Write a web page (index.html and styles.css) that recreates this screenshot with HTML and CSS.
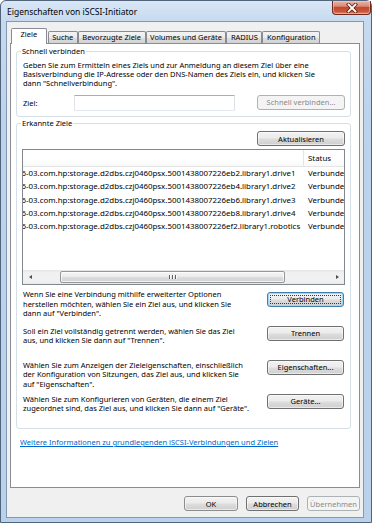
FILE: index.html
```html
<!DOCTYPE html>
<html lang="de">
<head>
<meta charset="utf-8">
<title>Eigenschaften von iSCSI-Initiator</title>
<link rel="stylesheet" href="styles.css">
</head>
<body>
<div class="window">
  <div class="titlebar">
    <span class="title">Eigenschaften von iSCSI-Initiator</span>
    <button class="close" type="button" aria-label="Schließen">
      <svg width="12" height="10" viewBox="0 0 12 10" aria-hidden="true">
        <path d="M2.5 1.5 L9.5 8.5 M9.5 1.5 L2.5 8.5" stroke="#5a1c10" stroke-width="3.4" stroke-linecap="square" fill="none"/>
        <path d="M2.5 1.5 L9.5 8.5 M9.5 1.5 L2.5 8.5" stroke="#ffffff" stroke-width="1.8" stroke-linecap="square" fill="none"/>
      </svg>
    </button>
  </div>
  <div class="client">
    <div class="tabs">
      <div class="tab tab-active">Ziele</div>
      <div class="tab">Suche</div>
      <div class="tab">Bevorzugte Ziele</div>
      <div class="tab">Volumes und Geräte</div>
      <div class="tab">RADIUS</div>
      <div class="tab">Konfiguration</div>
    </div>
    <div class="panel">
      <fieldset class="group group-quick">
        <legend>Schnell verbinden</legend>
        <p class="desc">Geben Sie zum Ermitteln eines Ziels und zur Anmeldung an diesem Ziel über eine<br>Basisverbindung die IP-Adresse oder den DNS-Namen des Ziels ein, und klicken Sie<br>dann "Schnellverbindung".</p>
        <div class="quick-row">
          <label class="quick-label" for="ziel">Ziel:</label>
          <input id="ziel" class="textbox" type="text">
          <button class="btn btn-wide" type="button" disabled>Schnell verbinden...</button>
        </div>
      </fieldset>

      <fieldset class="group group-targets">
        <legend>Erkannte Ziele</legend>
        <div class="refresh-row">
          <button class="btn btn-wide" type="button">Aktualisieren</button>
        </div>
        <div class="listview">
          <div class="lv-header">
            <div class="lv-col-name"></div>
            <div class="lv-col-status">Status</div>
          </div>
          <div class="lv-body">
            <div class="lv-row"><div class="lv-name"><span class="off"><span>iqn.1986</span></span>-03.com.hp:storage.d2dbs.czj0460psx.5001438007226eb2.library1.drive1</div><div class="lv-status">Verbunden</div></div>
            <div class="lv-row"><div class="lv-name"><span class="off"><span>iqn.1986</span></span>-03.com.hp:storage.d2dbs.czj0460psx.5001438007226eb4.library1.drive2</div><div class="lv-status">Verbunden</div></div>
            <div class="lv-row"><div class="lv-name"><span class="off"><span>iqn.1986</span></span>-03.com.hp:storage.d2dbs.czj0460psx.5001438007226eb6.library1.drive3</div><div class="lv-status">Verbunden</div></div>
            <div class="lv-row"><div class="lv-name"><span class="off"><span>iqn.1986</span></span>-03.com.hp:storage.d2dbs.czj0460psx.5001438007226eb8.library1.drive4</div><div class="lv-status">Verbunden</div></div>
            <div class="lv-row"><div class="lv-name"><span class="off"><span>iqn.1986</span></span>-03.com.hp:storage.d2dbs.czj0460psx.5001438007226ef2.library1.robotics</div><div class="lv-status">Verbunden</div></div>
          </div>
          <div class="hscroll">
            <div class="sb-arrow"><span class="tri tri-left"></span></div>
            <div class="sb-track">
              <div class="sb-thumb"><span class="grip"></span><span class="grip"></span><span class="grip"></span></div>
            </div>
            <div class="sb-arrow"><span class="tri tri-right"></span></div>
          </div>
        </div>

        <div class="action action-first">
          <p class="action-text action-text-first">Wenn Sie eine Verbindung mithilfe erweiterter Optionen<br>herstellen möchten, wählen Sie ein Ziel aus, und klicken Sie<br>dann auf "Verbinden".</p>
          <button class="btn btn-action btn-default" type="button">Verbinden</button>
        </div>
        <div class="action">
          <p class="action-text">Soll ein Ziel vollständig getrennt werden, wählen Sie das Ziel<br>aus, und klicken Sie dann auf "Trennen".</p>
          <button class="btn btn-action" type="button">Trennen</button>
        </div>
        <div class="action">
          <p class="action-text">Wählen Sie zum Anzeigen der Zieleigenschaften, einschließlich<br>der Konfiguration von Sitzungen, das Ziel aus, und klicken Sie<br>auf "Eigenschaften".</p>
          <button class="btn btn-action" type="button">Eigenschaften...</button>
        </div>
        <div class="action">
          <p class="action-text">Wählen Sie zum Konfigurieren von Geräten, die einem Ziel<br>zugeordnet sind, das Ziel aus, und klicken Sie dann auf "Geräte".</p>
          <button class="btn btn-action" type="button">Geräte...</button>
        </div>
      </fieldset>

      <a class="link" href="#">Weitere Informationen zu grundlegenden iSCSI-Verbindungen und Zielen</a>
    </div>
    <div class="footer">
      <button class="btn btn-ok" type="button">OK</button>
      <button class="btn btn-foot" type="button">Abbrechen</button>
      <button class="btn btn-foot" type="button" disabled>Übernehmen</button>
    </div>
  </div>
</div>
</body>
</html>
```

FILE: styles.css
```css
* { box-sizing: border-box; }
html, body { margin: 0; padding: 0; }
body {
  width: 372px;
  height: 523px;
  overflow: hidden;
  background: #ffffff;
  font-family: "Noto Sans", "Liberation Sans", sans-serif;
  font-size: 7.5px;
  line-height: 9.3px;
  color: #000;
}

.window {
  width: 372px;
  height: 523px;
  border: 1px solid #51647b;
  border-radius: 6px 6px 0 0;
  background: linear-gradient(180deg, #d9e7f6 0px, #c6daef 20px, #bcd3ec 120px, #b9d1ea 100%);
  display: flex;
  flex-direction: column;
}

.titlebar {
  height: 20px;
  display: flex;
  align-items: flex-start;
  padding-left: 6px;
}
.title {
  font-size: 8.5px;
  line-height: 20px;
  padding-top: 1px;
  color: #000;
}
.close {
  margin-left: auto;
  width: 39px;
  height: 14px;
  padding: 0;
  border: 1px solid #6d2b1f;
  border-top: none;
  border-radius: 0 0 4px 4px;
  background: linear-gradient(180deg, #eab3a6 0%, #d98a77 40%, #c24a2e 50%, #c9553a 80%, #e08a6e 100%);
  box-shadow: inset 0 0 0 1px rgba(255, 220, 210, 0.45);
  display: flex;
  align-items: center;
  justify-content: center;
}
.close svg { display: block; }

.client {
  flex: 1;
  margin: 0 7px 4px 5px;
  background: #f0f0f0;
  border: 1px solid #8598b1;
  padding: 6px 3px 6px 3px;
  display: flex;
  flex-direction: column;
}

/* tabs */
.tabs {
  height: 15px;
  display: flex;
  align-items: flex-end;
  padding-left: 1px;
}
.tab {
  height: 12px;
  padding: 0 3.5px;
  border: 1px solid #898c95;
  border-bottom: none;
  border-radius: 2px 2px 0 0;
  background: linear-gradient(180deg, #f3f3f3 0%, #ebebeb 50%, #dddddd 51%, #d3d3d3 100%);
  line-height: 11px;
  white-space: nowrap;
}
.tab-active {
  height: 16px;
  margin-bottom: -1px;
  padding: 0 8.5px;
  margin-right: 1px;
  background: #ffffff;
  line-height: 11px;
  position: relative;
  z-index: 1;
}

.panel {
  height: 445px;
  border: 1px solid #898c95;
  background: #ffffff;
  padding: 2.5px 8px 0 5px;
}

/* group boxes */
.group {
  margin: 0;
  min-width: 0;
  border: 1px solid #d5dfe5;
  border-radius: 3px;
  padding: 5px 5px 5px 6px;
}
.group legend {
  padding: 0 1px;
  margin-left: -2px;
  line-height: 9px;
}
.group-targets {
  margin-top: 2.5px;
  padding-top: 3px;
  padding-bottom: 0;
}

.desc, .action-text {
  margin: 0;
  white-space: nowrap;
}

.quick-row {
  display: flex;
  align-items: flex-start;
  margin-top: 6.6px;
}
.quick-label {
  width: 51px;
  line-height: 16px;
}
.textbox {
  width: 161px;
  height: 16px;
  margin: 0;
  padding: 0;
  border: 1px solid;
  border-color: #abadb3 #dbdfe6 #e3e9ef #e2e3ea;
  border-radius: 1px;
  background: #fff;
}

/* buttons */
.btn {
  height: 15px;
  margin: 0;
  padding: 0;
  border: 1px solid #707070;
  border-radius: 3px;
  background: linear-gradient(180deg, #f2f2f2 0%, #ebebeb 48%, #dddddd 52%, #cfcfcf 100%);
  box-shadow: inset 0 0 0 1px rgba(255, 255, 255, 0.55);
  font: inherit;
  line-height: 12px;
  color: #000;
  text-align: center;
  white-space: nowrap;
}
.btn:disabled {
  border-color: #adb2b5;
  background: #f4f4f4;
  box-shadow: none;
  color: #8a8a8a;
}
.btn-wide {
  width: 88px;
  margin-left: auto;
}
.btn-action {
  width: 77px;
  margin-left: auto;
  margin-right: 1px;
}
.btn-default {
  border-color: #3c7fb1;
  box-shadow: inset 0 0 0 1px #9fd5f5;
  outline: 1px dotted #3a3a3a;
  outline-offset: -4px;
}

.refresh-row {
  display: flex;
}

/* list view */
.listview {
  margin: 2.5px 0 0 -1px;
  height: 136px;
  border: 1px solid #828790;
  background: #fff;
  display: flex;
  flex-direction: column;
  overflow: hidden;
  font-size: 7.9px;
}
.lv-header {
  height: 17px;
  flex: none;
  display: flex;
  border-bottom: 1px solid #e5e5e5;
  background: linear-gradient(180deg, #ffffff 0%, #ffffff 60%, #f7f8f9 100%);
}
.lv-col-name {
  width: 281px;
  flex: none;
  border-right: 1px solid #e5e5e5;
}
.lv-col-status {
  padding: 2px 0 0 4px;
  line-height: 13px;
}
.lv-body {
  flex: 1;
}
.lv-row {
  display: flex;
  height: 13.33px;
  line-height: 13.33px;
  white-space: nowrap;
}
.lv-name {
  width: 281px;
  flex: none;
  overflow: hidden;
  display: flex;
}
.off {
  display: inline-flex;
  justify-content: flex-end;
  width: 3px;
  overflow: hidden;
  flex: none;
}
.lv-status {
  padding-left: 4px;
  overflow: hidden;
}

.hscroll {
  flex: none;
  height: 14px;
  display: flex;
  background: linear-gradient(180deg, #e4e4e4 0%, #f1f1f1 20%, #f1f1f1 80%, #e9e9e9 100%);
}
.sb-arrow {
  width: 14px;
  flex: none;
  display: flex;
  align-items: center;
  justify-content: center;
}
.tri {
  width: 0;
  height: 0;
  border-top: 2.5px solid transparent;
  border-bottom: 2.5px solid transparent;
}
.tri-left { border-right: 3px solid #4d4d4d; }
.tri-right { border-left: 3px solid #4d4d4d; }
.sb-track {
  flex: 1;
  padding: 1px 0;
}
.sb-thumb {
  margin-left: 23px;
  width: 225px;
  height: 12px;
  border: 1px solid #979797;
  border-radius: 2px;
  background: linear-gradient(180deg, #f5f5f5 0%, #ececec 45%, #dcdcdc 55%, #d2d2d2 100%);
  box-shadow: inset 0 0 0 1px rgba(255, 255, 255, 0.7);
  display: flex;
  align-items: center;
  justify-content: center;
  gap: 1px;
}
.grip {
  width: 1px;
  height: 4px;
  background: #606060;
  box-shadow: 1px 0 0 #fafafa;
  margin-right: 1px;
}

/* action rows */
.action {
  display: flex;
  align-items: flex-start;
  height: 34px;
}
.action-first { margin-top: 7px; }
.action-text { margin-top: 1px; }
.action-text-first { margin-top: -1.5px; }

.link {
  display: inline-block;
  margin: 9.3px 0 0 4px;
  color: #0066cc;
  text-decoration: underline;
}

/* footer */
.footer {
  margin-top: 8px;
  display: flex;
  justify-content: flex-end;
  gap: 8px;
}
.btn-ok {
  width: 54px;
  border-color: #8c8c8c;
}
.btn-foot {
  width: 53px;
}
```
